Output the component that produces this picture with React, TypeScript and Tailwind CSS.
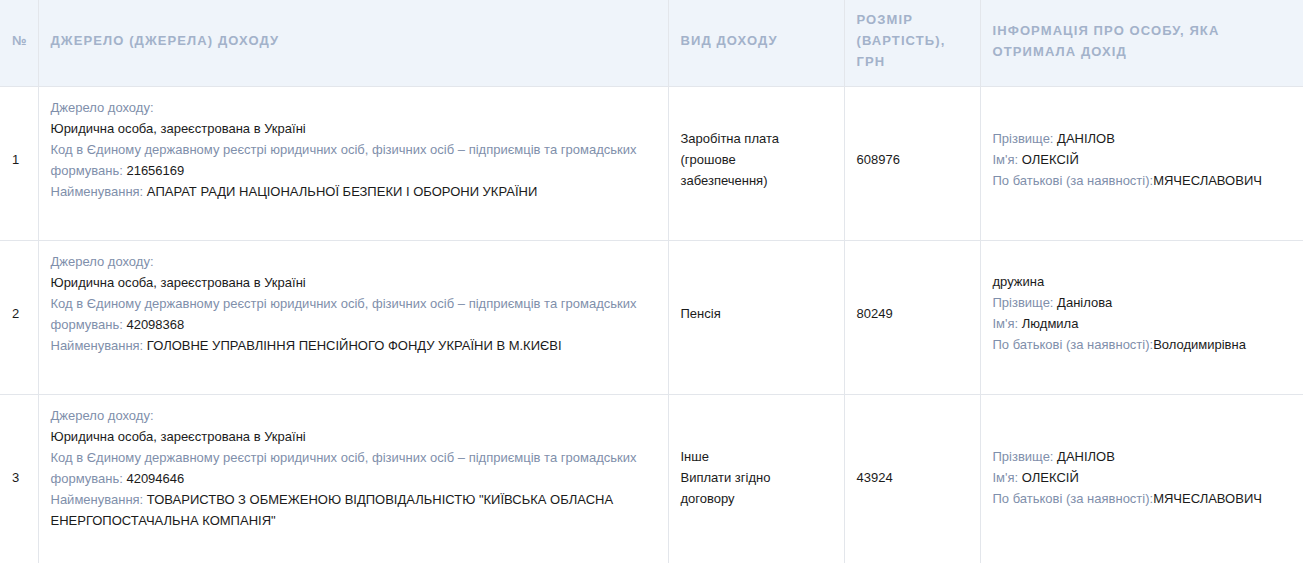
type Person = { relation?: string; surname: string; name: string; patronymic: string };

type Row = {
  n: number;
  code: string;
  title: string;
  kind: string[];
  amount: string;
  person: Person;
};

const rows: Row[] = [
  {
    n: 1,
    code: '21656169',
    title: 'АПАРАТ РАДИ НАЦІОНАЛЬНОЇ БЕЗПЕКИ І ОБОРОНИ УКРАЇНИ',
    kind: ['Заробітна плата', '(грошове', 'забезпечення)'],
    amount: '608976',
    person: { surname: 'ДАНІЛОВ', name: 'ОЛЕКСІЙ', patronymic: 'МЯЧЕСЛАВОВИЧ' },
  },
  {
    n: 2,
    code: '42098368',
    title: 'ГОЛОВНЕ УПРАВЛІННЯ ПЕНСІЙНОГО ФОНДУ УКРАЇНИ В М.КИЄВІ',
    kind: ['Пенсія'],
    amount: '80249',
    person: { relation: 'дружина', surname: 'Данілова', name: 'Людмила', patronymic: 'Володимирівна' },
  },
  {
    n: 3,
    code: '42094646',
    title: 'ТОВАРИСТВО З ОБМЕЖЕНОЮ ВІДПОВІДАЛЬНІСТЮ "КИЇВСЬКА ОБЛАСНА ЕНЕРГОПОСТАЧАЛЬНА КОМПАНІЯ"',
    kind: ['Інше', 'Виплати згідно', 'договору'],
    amount: '43924',
    person: { surname: 'ДАНІЛОВ', name: 'ОЛЕКСІЙ', patronymic: 'МЯЧЕСЛАВОВИЧ' },
  },
];

const th =
  'px-3 pt-[9px] pb-[13px] text-left align-middle text-[13px] font-bold uppercase leading-[21px] tracking-[1.1px] text-[#a3b2ca] border-b border-[#e3e6eb]';
const td = 'px-3 pt-[10px] pb-[18px] align-middle border-b border-[#e3e6eb]';

function Label({ children }: { children: React.ReactNode }) {
  return <span className="text-[#7f8fab]">{children}</span>;
}

export default function App() {
  return (
    <div className="w-[1303px] bg-white font-['Liberation_Sans',Arial,sans-serif] text-[13px] leading-[21px] text-[#1b1b1b]">
      <table className="w-full table-fixed border-collapse">
        <colgroup>
          <col className="w-[38px]" />
          <col className="w-[630px]" />
          <col className="w-[176px]" />
          <col className="w-[136px]" />
          <col />
        </colgroup>
        <thead className="bg-[#eff4fa]">
          <tr className="h-[86px]">
            <th className={th}>№</th>
            <th className={`${th} border-l`}>Джерело (джерела) доходу</th>
            <th className={`${th} border-l`}>Вид доходу</th>
            <th className={`${th} border-l`}>Розмір (вартість), грн</th>
            <th className={`${th} border-l`}>Інформація про особу, яка отримала дохід</th>
          </tr>
        </thead>
        <tbody>
          {rows.map((r) => (
            <tr key={r.n}>
              <td className={td}>{r.n}</td>
              <td className="border-b border-l border-[#e3e6eb] px-3 pt-[10px] pb-[38px] align-top">
                <div>
                  <Label>Джерело доходу:</Label>
                </div>
                <div>Юридична особа, зареєстрована в Україні</div>
                <div>
                  <Label>
                    Код в Єдиному державному реєстрі юридичних осіб, фізичних осіб – підприємців та громадських
                    формувань:
                  </Label>{' '}
                  {r.code}
                </div>
                <div>
                  <Label>Найменування:</Label> {r.title}
                </div>
              </td>
              <td className={`${td} border-l`}>
                {r.kind.map((k) => (
                  <div key={k}>{k}</div>
                ))}
              </td>
              <td className={`${td} border-l`}>{r.amount}</td>
              <td className={`${td} border-l`}>
                {r.person.relation && <div>{r.person.relation}</div>}
                <div>
                  <Label>Прізвище:</Label> {r.person.surname}
                </div>
                <div>
                  <Label>Ім'я:</Label> {r.person.name}
                </div>
                <div>
                  <Label>По батькові (за наявності):</Label>
                  {r.person.patronymic}
                </div>
              </td>
            </tr>
          ))}
        </tbody>
      </table>
    </div>
  );
}
